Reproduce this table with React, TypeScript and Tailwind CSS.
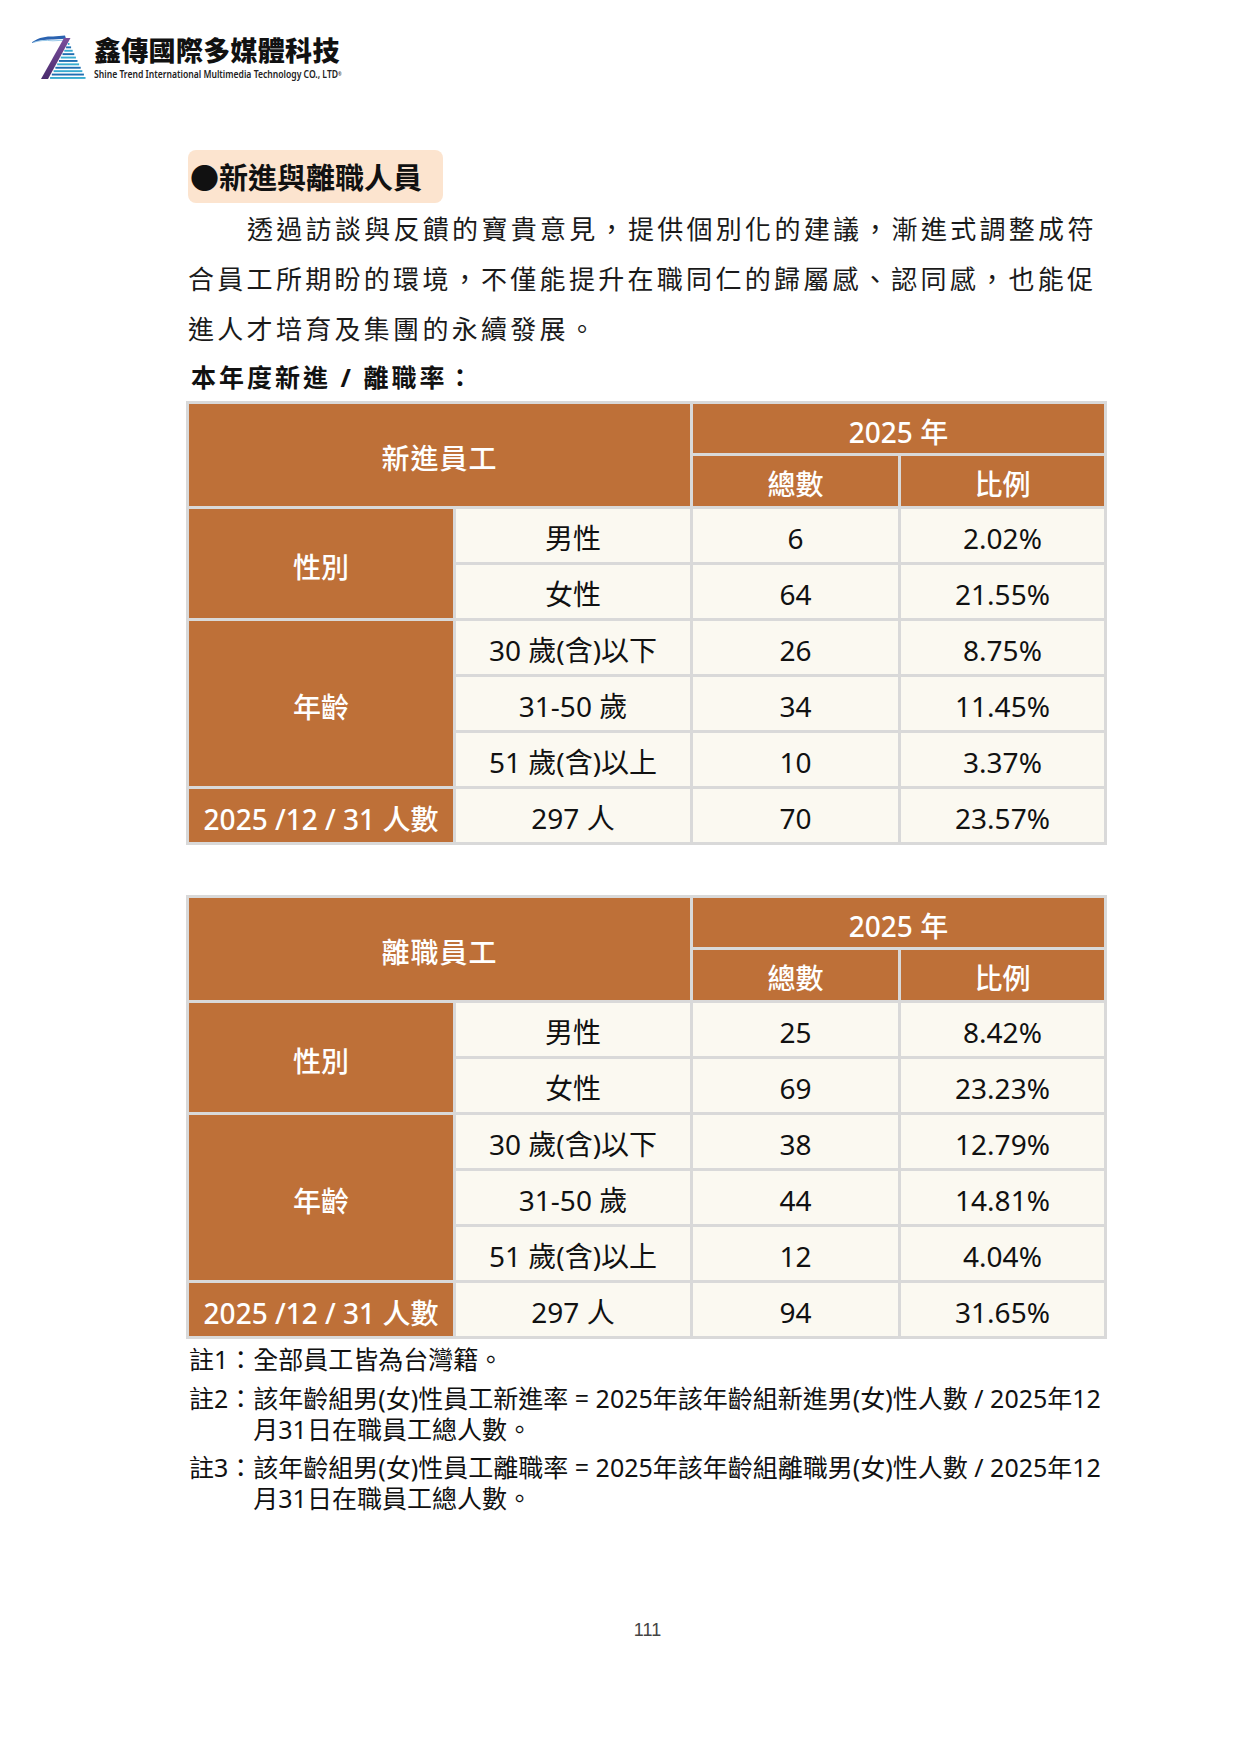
import React from "react";

const CJK = "font-['Noto_Sans','Noto_Sans_CJK_TC',sans-serif]";

function Logo() {
  const stripes = [] as React.ReactNode[];
  for (let i = 0; i < 11; i++) {
    const y = 9 + i * 3.4;
    const x1 = 39 - ((y - 3) * 22) / 42 + 1;
    const x2 = 38 + ((y - 8) * 17) / 36;
    stripes.push(
      <rect key={i} x={x1} y={y} width={Math.max(0, x2 - x1)} height={1.9} fill={i % 2 === 0 ? "#38acd0" : "#1f6fb2"} />
    );
  }
  return (
    <svg width="56" height="46" viewBox="0 0 56 46" className="block">
      <defs>
        <linearGradient id="pg" x1="0" y1="0" x2="0" y2="1">
          <stop offset="0" stopColor="#7a4e9c" />
          <stop offset="1" stopColor="#4b2c6e" />
        </linearGradient>
      </defs>
      <path d="M0 9 C6 4 14 2 22 2.5 L34 1.5 L35 4.8 L22 5.6 C15 5.4 8 6.5 0 9 Z" fill="#2a62b0" />
      <path d="M2 8.5 C8 6.5 14 6 22 6.8 L33 6.2" stroke="#8fc3e6" strokeWidth="0.9" fill="none" />
      <polygon points="33,4 39.5,4 17,45 10,45" fill="url(#pg)" />
      {stripes}
    </svg>
  );
}

type Row = { label: string; count: string; rate: string };

function HeadCell({ children, className = "" }: { children: React.ReactNode; className?: string }) {
  return (
    <div className={`flex items-center justify-center bg-[#be7038] pt-[6px] text-[28px] font-medium text-white ${className}`}>
      {children}
    </div>
  );
}

function BodyCell({ children }: { children: React.ReactNode }) {
  return (
    <div className="flex items-center justify-center bg-[#fbf9f1] pt-[5px] text-[28px] text-[#111]">{children}</div>
  );
}

function StatTable({ title, gender, age, total }: { title: string; gender: Row[]; age: Row[]; total: Row }) {
  return (
    <div className="grid w-fit grid-cols-[264px_234px_205px_203px] grid-rows-[49px_50px_repeat(6,53px)] gap-[3px] bg-[#d9d9d9] p-[3px]">
      <HeadCell className="col-span-2 row-span-2 tracking-[1px]">{title}</HeadCell>
      <HeadCell className="col-span-2">2025 年</HeadCell>
      <HeadCell>總數</HeadCell>
      <HeadCell>比例</HeadCell>
      <HeadCell className="row-span-2">性別</HeadCell>
      {gender.map((r) => (
        <React.Fragment key={r.label}>
          <BodyCell>{r.label}</BodyCell>
          <BodyCell>{r.count}</BodyCell>
          <BodyCell>{r.rate}</BodyCell>
        </React.Fragment>
      ))}
      <HeadCell className="row-span-3">年齡</HeadCell>
      {age.map((r) => (
        <React.Fragment key={r.label}>
          <BodyCell>{r.label}</BodyCell>
          <BodyCell>{r.count}</BodyCell>
          <BodyCell>{r.rate}</BodyCell>
        </React.Fragment>
      ))}
      <HeadCell>2025 /12 / 31 人數</HeadCell>
      <BodyCell>{total.label}</BodyCell>
      <BodyCell>{total.count}</BodyCell>
      <BodyCell>{total.rate}</BodyCell>
    </div>
  );
}

export default function App() {
  return (
    <div className={`relative h-[1755px] w-[1241px] bg-white text-black ${CJK}`}>
      {/* header */}
      <div className="box-border h-[150px] pt-[34px] pl-[31px]">
        <div className="flex items-start">
          <Logo />
          <div className="ml-[7px] flex flex-col">
            <div className="font-['Noto_Sans_CJK_TC',sans-serif] text-[27px] leading-[32px] font-black tracking-[0.3px] text-[#111]">
              鑫傳國際多媒體科技
            </div>
            <div className="mt-[2px] origin-left scale-x-[0.86] whitespace-nowrap text-[10px] leading-[12px] font-semibold text-[#222]">
              Shine Trend International Multimedia Technology CO., LTD<sup className="text-[5px]">®</sup>
            </div>
          </div>
        </div>
      </div>

      {/* content column */}
      <div className="ml-[187px] w-[921px]">
        <div className="ml-[1px] flex h-[53px] w-[255px] items-center rounded-[8px] bg-[#fce4cf] pl-[2px]">
          <span className="font-['Noto_Sans_CJK_TC',sans-serif] text-[29px] leading-none font-bold text-[#111]">
            ●新進與離職人員
          </span>
        </div>

        <div className="ml-[1px] font-['Noto_Sans_CJK_TC',sans-serif] text-[26px] leading-[50px] tracking-[3.3px] text-[#1a1a1a]">
          <div className="whitespace-nowrap pl-[59px]">透過訪談與反饋的寶貴意見，提供個別化的建議，漸進式調整成符</div>
          <div className="whitespace-nowrap">合員工所期盼的環境，不僅能提升在職同仁的歸屬感、認同感，也能促</div>
          <div className="whitespace-nowrap">進人才培育及集團的永續發展。</div>
        </div>

        <div className="ml-[4px] text-[25px] leading-[48px] font-bold tracking-[3px] text-[#111]">本年度新進 / 離職率：</div>

        <div className="-ml-[1px]">
          <StatTable
            title="新進員工"
            gender={[
              { label: "男性", count: "6", rate: "2.02%" },
              { label: "女性", count: "64", rate: "21.55%" },
            ]}
            age={[
              { label: "30 歲(含)以下", count: "26", rate: "8.75%" },
              { label: "31-50 歲", count: "34", rate: "11.45%" },
              { label: "51 歲(含)以上", count: "10", rate: "3.37%" },
            ]}
            total={{ label: "297 人", count: "70", rate: "23.57%" }}
          />
        </div>

        <div className="-ml-[1px] mt-[50px]">
          <StatTable
            title="離職員工"
            gender={[
              { label: "男性", count: "25", rate: "8.42%" },
              { label: "女性", count: "69", rate: "23.23%" },
            ]}
            age={[
              { label: "30 歲(含)以下", count: "38", rate: "12.79%" },
              { label: "31-50 歲", count: "44", rate: "14.81%" },
              { label: "51 歲(含)以上", count: "12", rate: "4.04%" },
            ]}
            total={{ label: "297 人", count: "94", rate: "31.65%" }}
          />
        </div>

        <div className="ml-[2px] mt-[5px] text-[25px] leading-[31px] text-[#111]">
          <div className="flex">
            <span className="whitespace-nowrap">註1：</span>
            <div className="whitespace-nowrap">全部員工皆為台灣籍。</div>
          </div>
          <div className="mt-[8px] flex">
            <span className="whitespace-nowrap">註2：</span>
            <div>
              <div className="whitespace-nowrap">該年齡組男(女)性員工新進率 = 2025年該年齡組新進男(女)性人數 / 2025年12</div>
              <div className="whitespace-nowrap">月31日在職員工總人數。</div>
            </div>
          </div>
          <div className="mt-[7px] flex">
            <span className="whitespace-nowrap">註3：</span>
            <div>
              <div className="whitespace-nowrap">該年齡組男(女)性員工離職率 = 2025年該年齡組離職男(女)性人數 / 2025年12</div>
              <div className="whitespace-nowrap">月31日在職員工總人數。</div>
            </div>
          </div>
        </div>

        <div className="mt-[106px] text-center font-['Liberation_Sans',sans-serif] text-[18px] leading-[20px] text-[#444]">111</div>
      </div>
    </div>
  );
}
